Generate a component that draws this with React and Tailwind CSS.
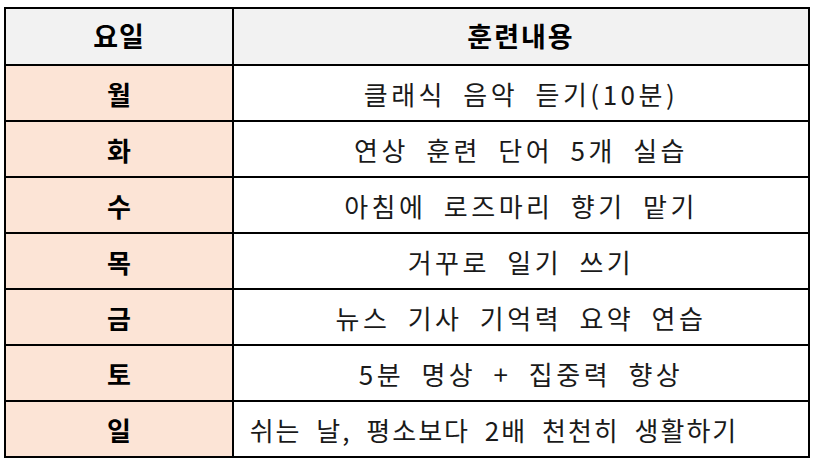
import React from 'react';

const rows = [
  ['월', '클래식 음악 듣기(10분)'],
  ['화', '연상 훈련 단어 5개 실습'],
  ['수', '아침에 로즈마리 향기 맡기'],
  ['목', '거꾸로 일기 쓰기'],
  ['금', '뉴스 기사 기억력 요약 연습'],
  ['토', '5분 명상 + 집중력 향상'],
  ['일', '쉬는 날, 평소보다 2배 천천히 생활하기'],
];

const App = () => {
  return (
    <div
      className="w-[819px] h-[460px] bg-white pl-[4px] pt-[7px]"
      style={{ fontFamily: '"Noto Sans CJK KR", "Noto Sans", sans-serif' }}
    >
      <table className="w-[806px] border-collapse border-2 border-black">
        <thead>
          <tr className="h-[57px] bg-[#f2f2f2]">
            <th className="w-[228px] border-2 border-black text-[27px] font-bold text-black tracking-[1px]">
              요일
            </th>
            <th className="border-2 border-black text-[27px] font-bold text-black tracking-[2px]">
              훈련내용
            </th>
          </tr>
        </thead>
        <tbody>
          {rows.map(([day, text], i) => (
            <tr key={day} className="h-[56px]">
              <td className="border-2 border-black bg-[#fce4d6] text-center text-[26px] font-bold text-black">
                {day}
              </td>
              {i === rows.length - 1 ? (
                <td className="border-2 border-black bg-white text-center text-[26px] text-[#1a1a1a] tracking-[2px] [word-spacing:7px] pr-[54px]">
                  {text}
                </td>
              ) : (
                <td className="border-2 border-black bg-white text-center text-[26px] text-[#1a1a1a] tracking-[3.5px] [word-spacing:8px]">
                  {text}
                </td>
              )}
            </tr>
          ))}
        </tbody>
      </table>
    </div>
  );
};

export default App;
